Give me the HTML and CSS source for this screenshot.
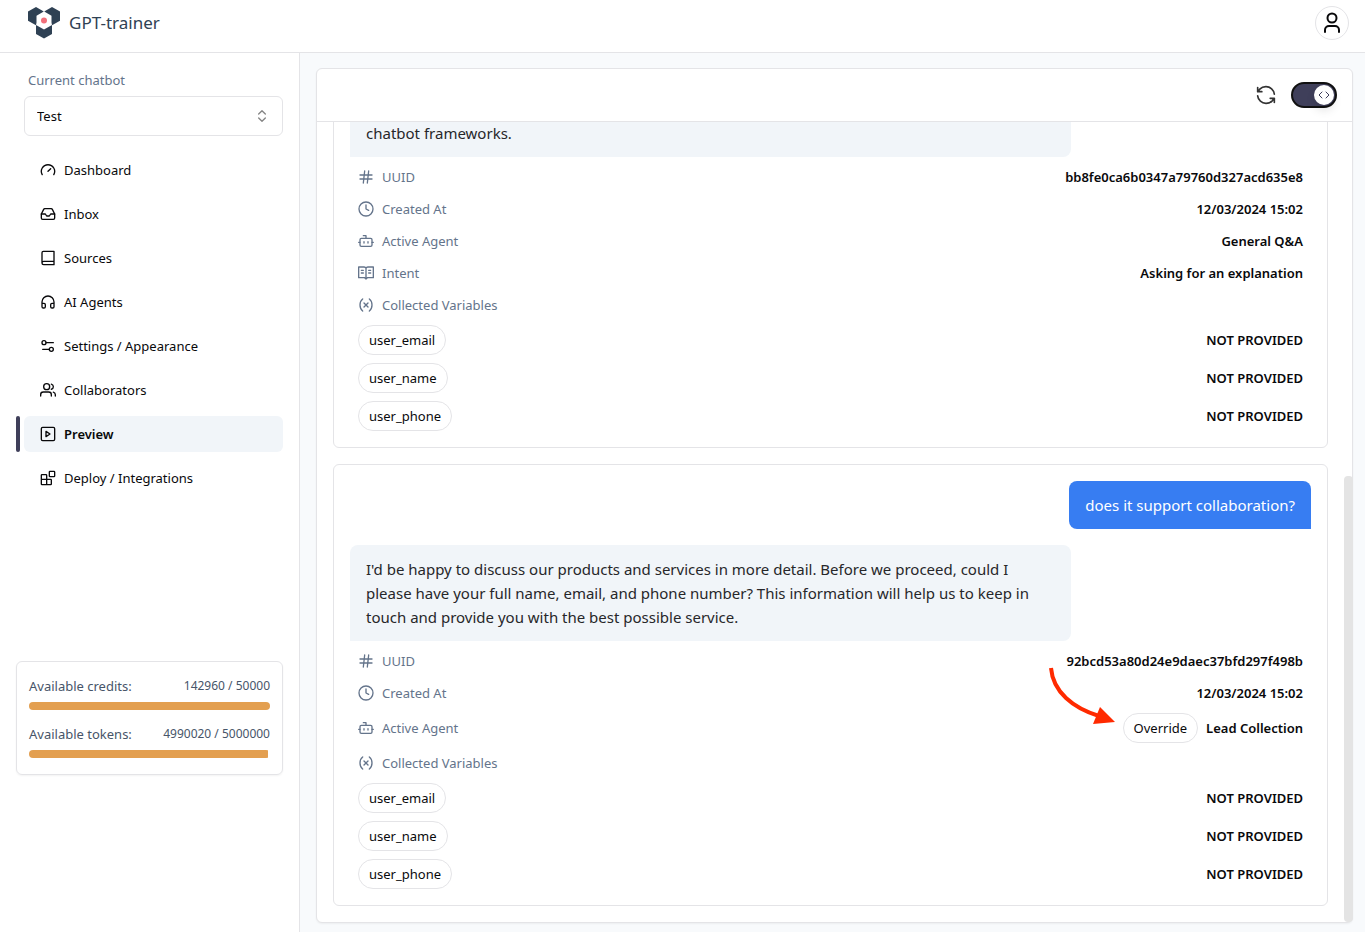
FILE: index.html
```html
<!DOCTYPE html>
<html lang="en">
<head>
  <meta charset="UTF-8" />
  <meta name="viewport" content="width=device-width, initial-scale=1.0" />
  <title>GPT-trainer</title>
  <link rel="stylesheet" href="styles.css">
</head>
<body>
  <!-- Shared icons -->
  <svg class="sprite" aria-hidden="true">
    <symbol id="i-hash" viewBox="0 0 24 24"><path d="M3 9h18M3 15h18M10 3 8 21M16 3l-2 18"/></symbol>
    <symbol id="i-clock" viewBox="0 0 24 24"><circle cx="12" cy="12" r="10.500"/><path d="M12 6v6l4 2"/></symbol>
    <symbol id="i-bot" viewBox="0 0 24 24"><path d="M12 8V4H8M1 14h2M21 14h2M15 13v2M9 13v2"/><rect x="3" y="8" width="18" height="12" rx="2"/></symbol>
    <symbol id="i-book" viewBox="0 0 24 24"><path d="M12 4v17M1 3h8a3 3 0 0 1 3 2 3 3 0 0 1 3-2h8v16h-9l-2 2-2-2H1zM5 8h3M5 12h3M16 8h3M16 12h3"/></symbol>
    <symbol id="i-var" viewBox="0 0 24 24"><path d="M7 21s-4-3-4-9 4-9 4-9M17 3s4 3 4 9-4 9-4 9M15 9l-6 6M9 9l6 6"/></symbol>
  </svg>

  <header class="header">
    <a class="logo" href="#">
      <svg width="32" height="32" viewBox="0 0 32 32">
        <path fill="#2f4154" d="M0 4.500 8 0l7.800 4.400L8.500 8.800v6.700L8 18.200 0 13.800z"/>
        <path fill="#2f4154" d="M32 4.500 24 0l-7.800 4.400 7.300 4.400v6.700l.5 2.700 8-4.400z"/>
        <path fill="#2f4154" d="m8 18 8 4.500 8-4.500v9l-8 4.500L8 27z"/>
        <circle cx="16" cy="13.500" r="3" fill="#f1707b"/>
      </svg>
      <span>GPT-trainer</span>
    </a>
    <button class="avatar" aria-label="Account">
      <svg class="icon" width="24" height="24" viewBox="0 0 24 24"><circle cx="12" cy="7" r="4.500"/><path d="M5 21v-2a4 4 0 0 1 4-4h6a4 4 0 0 1 4 4v2"/></svg>
    </button>
  </header>

  <div class="layout">
    <aside class="sidebar">
      <label class="chatbot-label" for="chatbot">Current chatbot</label>
      <div class="select-wrapper">
        <select id="chatbot">
          <option>Test</option>
        </select>
        <svg class="icon select-icon" width="16" height="16" viewBox="0 0 24 24"><path d="m7 9 5-5 5 5M7 15l5 5 5-5"/></svg>
      </div>

      <nav class="nav">
        <a href="#"><svg class="icon" width="16" height="16" viewBox="0 0 24 24"><path d="m12 14 4-4M3.300 19a10 10 0 1 1 17.400 0"/></svg>Dashboard</a>
        <a href="#"><svg class="icon" width="16" height="16" viewBox="0 0 24 24"><path d="M22 12h-6l-2 3h-4l-2-3H2"/><path d="M5.500 5.100 2 12v6a2 2 0 0 0 2 2h16a2 2 0 0 0 2-2v-6l-3.500-6.900A2 2 0 0 0 16.800 4H7.200a2 2 0 0 0-1.700 1.100z"/></svg>Inbox</a>
        <a href="#"><svg class="icon" width="16" height="16" viewBox="0 0 24 24"><path d="M3 19V4a2 2 0 0 1 2-2h16v20H5.500a2.500 2.500 0 0 1 0-5H21"/></svg>Sources</a>
        <a href="#"><svg class="icon" width="16" height="16" viewBox="0 0 24 24"><path d="M3 14h3a2 2 0 0 1 2 2v3a2 2 0 0 1-2 2H5a2 2 0 0 1-2-2v-7a9 9 0 0 1 18 0v7a2 2 0 0 1-2 2h-1a2 2 0 0 1-2-2v-3a2 2 0 0 1 2-2h3"/></svg>AI Agents</a>
        <a href="#"><svg class="icon" width="16" height="16" viewBox="0 0 24 24"><path d="M20 7H9M14 17H4"/><circle cx="17" cy="17" r="3"/><circle cx="6" cy="7" r="3"/></svg>Settings / Appearance</a>
        <a href="#"><svg class="icon" width="16" height="16" viewBox="0 0 24 24"><path d="M17 21v-2a4 4 0 0 0-4-4H5a4 4 0 0 0-4 4v2"/><circle cx="10" cy="7" r="4.500"/><path d="M23 21v-2a4 4 0 0 0-3-3.870M17 3.130a4 4 0 0 1 0 7.750"/></svg>Collaborators</a>
        <a href="#" class="active"><svg class="icon" width="16" height="16" viewBox="0 0 24 24"><rect x="2" y="2" width="20" height="20" rx="2"/><path d="m9 8 6 4-6 4z"/></svg>Preview</a>
        <a href="#"><svg class="icon" width="16" height="16" viewBox="0 0 24 24"><rect x="14" y="2" width="8" height="8" rx="1"/><path d="M10 22V8a1 1 0 0 0-1-1H3a1 1 0 0 0-1 1v13a1 1 0 0 0 1 1h13a1 1 0 0 0 1-1v-6a1 1 0 0 0-1-1H2"/></svg>Deploy / Integrations</a>
      </nav>

      <div class="usage">
        <div class="usage-row"><span>Available credits:</span><span class="usage-value">142960 / 50000</span></div>
        <div class="bar"><div class="bar-fill" style="width: 100%"></div></div>
        <div class="usage-row"><span>Available tokens:</span><span class="usage-value">4990020 / 5000000</span></div>
        <div class="bar"><div class="bar-fill" style="width: 99%"></div></div>
      </div>
    </aside>

    <main class="main">
      <section class="panel">
        <div class="toolbar">
          <button class="refresh" aria-label="Refresh">
            <svg class="icon" width="20" height="20" viewBox="0 0 24 24"><path d="M22 11a10 10 0 0 0-10-9 10.500 10.500 0 0 0-7.500 3L2 8M2 3v5h5M2 13a10 10 0 0 0 10 9 10.500 10.500 0 0 0 7.500-3L22 16M17 16h5v5"/></svg>
          </button>
          <label class="toggle">
            <input type="checkbox" aria-label="Debug mode" checked>
            <span class="knob"><svg class="icon" width="12" height="12" viewBox="0 0 24 24"><path d="m16 18 6-6-6-6M8 6l-6 6 6 6"/></svg></span>
          </label>
        </div>

        <div class="chat">
          <article class="card">
            <div class="message bot">chatbot frameworks.</div>
            <div class="details">
              <div class="row"><span class="key"><svg class="icon" width="16" height="16"><use href="#i-hash"/></svg>UUID</span><span class="value">bb8fe0ca6b0347a79760d327acd635e8</span></div>
              <div class="row"><span class="key"><svg class="icon" width="16" height="16"><use href="#i-clock"/></svg>Created At</span><span class="value">12/03/2024 15:02</span></div>
              <div class="row"><span class="key"><svg class="icon" width="16" height="16"><use href="#i-bot"/></svg>Active Agent</span><span class="value">General Q&amp;A</span></div>
              <div class="row"><span class="key"><svg class="icon" width="16" height="16"><use href="#i-book"/></svg>Intent</span><span class="value">Asking for an explanation</span></div>
              <div class="row"><span class="key"><svg class="icon" width="16" height="16"><use href="#i-var"/></svg>Collected Variables</span></div>
              <div class="row"><span class="pill">user_email</span><span class="value">NOT PROVIDED</span></div>
              <div class="row"><span class="pill">user_name</span><span class="value">NOT PROVIDED</span></div>
              <div class="row"><span class="pill">user_phone</span><span class="value">NOT PROVIDED</span></div>
            </div>
          </article>

          <article class="card">
            <div class="message user">does it support collaboration?</div>
            <div class="message bot">I'd be happy to discuss our products and services in more detail. Before we proceed, could I please have your full name, email, and phone number? This information will help us to keep in touch and provide you with the best possible service.</div>
            <div class="details">
              <div class="row"><span class="key"><svg class="icon" width="16" height="16"><use href="#i-hash"/></svg>UUID</span><span class="value">92bcd53a80d24e9daec37bfd297f498b</span></div>
              <div class="row"><span class="key"><svg class="icon" width="16" height="16"><use href="#i-clock"/></svg>Created At</span><span class="value">12/03/2024 15:02</span></div>
              <div class="row">
                <span class="key"><svg class="icon" width="16" height="16"><use href="#i-bot"/></svg>Active Agent</span>
                <span class="value agent">
                  <span class="override">
                    <svg class="arrow" width="68" height="60" viewBox="0 0 68 60"><path d="M3 3c2 24 22 40 48 48" fill="none" stroke="#ff2a00" stroke-width="4"/><path d="M52 42 67 57l-22 2z" fill="#ff2a00"/></svg>
                    <button class="pill">Override</button>
                  </span>
                  Lead Collection
                </span>
              </div>
              <div class="row"><span class="key"><svg class="icon" width="16" height="16"><use href="#i-var"/></svg>Collected Variables</span></div>
              <div class="row"><span class="pill">user_email</span><span class="value">NOT PROVIDED</span></div>
              <div class="row"><span class="pill">user_name</span><span class="value">NOT PROVIDED</span></div>
              <div class="row"><span class="pill">user_phone</span><span class="value">NOT PROVIDED</span></div>
            </div>
          </article>
        </div>
        <div class="scroll-thumb"></div>
      </section>
    </main>
  </div>
</body>
</html>
```
FILE: styles.css
```css
:root {
  --border: #e4e4e7;
  --muted: #64748b;
  --surface: #f1f5f9;
  --primary: #3f3f5a;
  --text: #09090b;
  --blue: #377df2;
}

* {
  box-sizing: border-box;
}

body {
  margin: 0;
  height: 100vh;
  display: flex;
  flex-direction: column;
  font-family: "Noto Sans", "Open Sans", sans-serif;
  font-size: 13px;
  line-height: 20px;
  color: var(--text);
  background: #fff;
}

button,
select {
  font: inherit;
  color: inherit;
}

a {
  color: inherit;
  text-decoration: none;
}

.sprite {
  display: none;
}

.icon {
  flex: none;
  fill: none;
  stroke: currentColor;
  stroke-width: 2;
  stroke-linecap: round;
  stroke-linejoin: round;
}

/* Header */
.header {
  flex: none;
  display: flex;
  align-items: center;
  justify-content: space-between;
  padding: 6px 16px 12px 28px;
  height: 53px;
  border-bottom: 1px solid var(--border);
}

.logo {
  display: flex;
  align-items: center;
  gap: 9px;
  font-size: 17px;
  color: #2f4154;
}

.avatar {
  display: flex;
  align-items: center;
  justify-content: center;
  width: 34px;
  height: 34px;
  padding: 0;
  border: 1px solid var(--border);
  border-radius: 50%;
  background: #fff;
}

.layout {
  flex: 1;
  min-height: 0;
  display: flex;
}

/* Sidebar */
.sidebar {
  flex: none;
  display: flex;
  flex-direction: column;
  width: 300px;
  padding: 17px 16px 157px;
  border-right: 1px solid var(--border);
}

.chatbot-label {
  margin-left: 12px;
  color: var(--muted);
}

.select-wrapper {
  position: relative;
  margin: 6px 0 16px 8px;
}

.select-wrapper select {
  display: block;
  width: 100%;
  height: 40px;
  padding: 0 12px;
  border: 1px solid var(--border);
  border-radius: 6px;
  background: #fff;
  appearance: none;
}

.select-icon {
  position: absolute;
  top: 12px;
  right: 13px;
  color: #858585;
  pointer-events: none;
}

.nav {
  display: flex;
  flex-direction: column;
  gap: 8px;
}

.nav a {
  position: relative;
  display: flex;
  align-items: center;
  gap: 8px;
  height: 36px;
  margin-left: 8px;
  padding: 0 16px;
  border-radius: 6px;
}

.nav .active {
  background: var(--surface);
  font-weight: 600;
}

.nav .active::before {
  content: "";
  position: absolute;
  top: 0;
  left: -8px;
  width: 4px;
  height: 100%;
  border-radius: 2px;
  background: var(--primary);
}

.usage {
  margin-top: auto;
  padding: 14px 12px 16px;
  border: 1px solid var(--border);
  border-radius: 6px;
  box-shadow: 0 1px 2px rgba(0, 0, 0, 0.05);
  color: #475569;
}

.usage-row {
  display: flex;
  align-items: center;
  justify-content: space-between;
}

.usage-value {
  font-size: 12px;
}

.bar {
  height: 8px;
  margin-top: 6px;
  border-radius: 4px;
  overflow: hidden;
}

.bar + .usage-row {
  margin-top: 14px;
}

.bar-fill {
  height: 100%;
  background: #e39f50;
}

/* Chat preview */
.main {
  flex: 1;
  min-width: 0;
  padding: 15px 12px 9px 16px;
  background: #f8fafc;
}

.panel {
  position: relative;
  display: flex;
  flex-direction: column;
  height: 100%;
  border: 1px solid var(--border);
  border-radius: 6px;
  background: #fff;
  box-shadow: 0 1px 2px rgba(0, 0, 0, 0.05);
}

.toolbar {
  flex: none;
  display: flex;
  align-items: center;
  justify-content: flex-end;
  gap: 15px;
  height: 53px;
  padding: 0 15px;
  border-bottom: 1px solid var(--border);
}

.refresh {
  display: flex;
  padding: 0;
  border: 0;
  background: none;
  color: #333;
}

.toggle {
  position: relative;
  display: flex;
}

.toggle input {
  appearance: none;
  width: 46px;
  height: 26px;
  margin: 0;
  border: 2px solid #111;
  border-radius: 13px;
  background: var(--primary);
}

.knob {
  position: absolute;
  top: 3px;
  right: 3px;
  display: flex;
  align-items: center;
  justify-content: center;
  width: 20px;
  height: 20px;
  border-radius: 50%;
  background: #fff;
  color: var(--primary);
  box-shadow: 0 6px 10px rgba(0, 0, 0, 0.1);
}

/* Stays pinned to the latest message */
.chat {
  flex: 1;
  min-height: 0;
  display: flex;
  flex-direction: column;
  justify-content: flex-end;
  gap: 16px;
  padding: 0 24px 16px 16px;
  overflow: hidden;
}

.scroll-thumb {
  position: absolute;
  right: -1px;
  bottom: 0;
  width: 9px;
  height: 446px;
  border-radius: 4px;
  background: #e4e4e4;
}

.card {
  flex: none;
  display: flex;
  flex-direction: column;
  padding: 16px 16px 12px;
  border: 1px solid var(--border);
  border-radius: 6px;
}

.message {
  padding: 12px 16px;
  border-radius: 8px;
  font-size: 15px;
  line-height: 24px;
}

.message.bot {
  width: 75%;
  padding-right: 24px;
  background: var(--surface);
  color: #27272a;
  border-bottom-left-radius: 0;
}

.message.user {
  align-self: flex-end;
  margin-bottom: 16px;
  background: var(--blue);
  color: #fff;
  border-bottom-right-radius: 0;
}

.details {
  padding: 4px 8px 0;
}

.row {
  display: flex;
  align-items: center;
  justify-content: space-between;
  min-height: 32px;
  padding: 4px 0;
}

.key {
  display: flex;
  align-items: center;
  gap: 8px;
  color: var(--muted);
}

.value {
  font-weight: 600;
}

.agent {
  display: flex;
  align-items: center;
  gap: 8px;
}

.pill {
  display: block;
  height: 30px;
  padding: 4px 10px;
  border: 1px solid var(--border);
  border-radius: 15px;
  background: #fff;
  font-weight: 400;
}

.override {
  position: relative;
}

.arrow {
  position: absolute;
  right: 82px;
  bottom: 18px;
}
```
